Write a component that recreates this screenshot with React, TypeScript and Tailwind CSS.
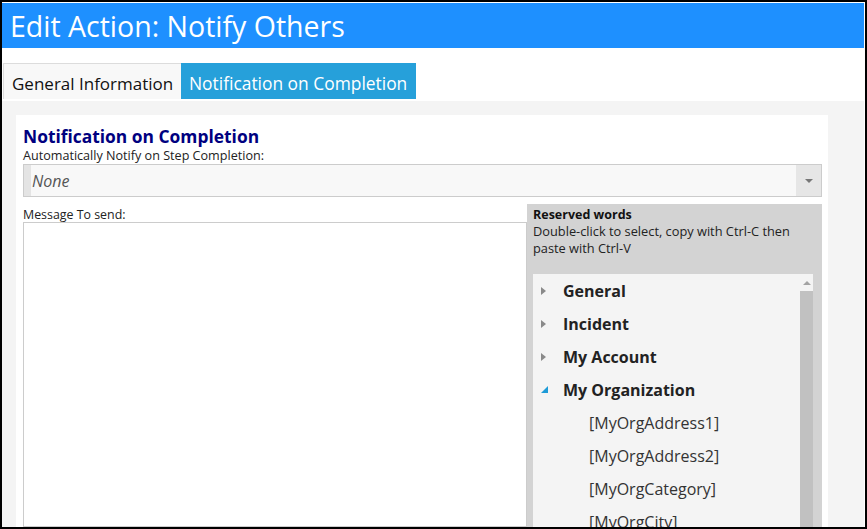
import React from "react";

const font = { fontFamily: '"Open Sans", "Noto Sans", sans-serif' };

function Collapsed() {
  return (
    <svg width="5" height="8" viewBox="0 0 5 8" className="block">
      <polygon points="0,0 5,4 0,8" fill="#8a8a8a" />
    </svg>
  );
}

function Expanded() {
  return (
    <svg width="7" height="7" viewBox="0 0 7 7" className="block">
      <polygon points="7,0 7,7 0,7" fill="#1e9bd7" />
    </svg>
  );
}

function GroupRow({ label, open }: { label: string; open?: boolean }) {
  return (
    <div className="flex h-[33px] items-center">
      <div className="flex w-[30px] justify-start pl-[8px]">
        {open ? <Expanded /> : <Collapsed />}
      </div>
      <span className="text-[16px] font-bold text-[#222]">{label}</span>
    </div>
  );
}

function ItemRow({ label }: { label: string }) {
  return (
    <div className="flex h-[33px] items-center pl-[56px] text-[16px] text-[#333]">{label}</div>
  );
}

export default function App() {
  return (
    <div
      className="flex h-[529px] w-[867px] flex-col overflow-hidden border-2 border-black bg-white"
      style={font}
    >
      <div className="h-px shrink-0" />
      <div className="mr-px flex h-[45px] shrink-0 items-center bg-[#1e90ff] pl-[8px] pt-[1px] text-[28.5px] text-white">
        Edit Action: Notify Others
      </div>
      <div className="h-[15px] shrink-0" />
      <div className="flex h-[36px] shrink-0 pl-px">
        <div className="flex w-[178px] items-center border-l border-t border-[#dcdcdc] bg-[#f8f8f8] pl-[8px] pt-[5px] text-[17px] text-[#111]">
          General Information
        </div>
        <div className="flex w-[235px] items-center bg-[#26a0da] pl-[8px] pt-[5px] text-[17.4px] text-white">
          Notification on Completion
        </div>
      </div>
      <div className="h-[2px] shrink-0" />
      <div className="mr-px flex min-h-0 flex-1 bg-[#f4f4f4] pl-[14px] pr-[36px] pt-[14px]">
        <div className="flex min-h-0 flex-1 flex-col bg-white pl-[7px] pr-[6px] pt-[9px]">
          <div className="text-[17.4px] font-bold leading-[24px] text-[#000080]">
            Notification on Completion
          </div>
          <div className="text-[12.6px] leading-[16px] text-[#222]">
            Automatically Notify on Step Completion:
          </div>
          <div className="flex h-[33px] shrink-0 border border-[#cccccc] bg-[#f8f8f8]">
            <div className="w-[7px] bg-[#e4e4e4]" />
            <div className="flex flex-1 items-center pl-[1px] text-[16px] italic text-[#555]">None</div>
            <div className="flex w-[25px] items-center justify-center bg-[#e6e6e6]">
              <svg width="8" height="4" viewBox="0 0 8 4" className="block">
                <polygon points="0,0 8,0 4,4" fill="#777" />
              </svg>
            </div>
          </div>
          <div className="flex min-h-0 flex-1 pt-[7px]">
            <div className="flex w-[504px] flex-col">
              <div className="pt-[3px] text-[12.4px] leading-[15px] text-[#222]">Message To send:</div>
              <div className="flex-1 border border-[#cccccc] bg-white" />
            </div>
            <div className="flex flex-1 flex-col bg-[#d3d3d3] pl-[6px] pr-[9px] pt-[3px]">
              <div className="text-[12.5px] font-bold leading-[16px] text-[#111]">Reserved words</div>
              <div className="whitespace-nowrap text-[12.8px] leading-[17px] text-[#222]">
                Double-click to select, copy with Ctrl-C then
                <br />
                paste with Ctrl-V
              </div>
              <div className="mt-[17px] flex min-h-0 flex-1 bg-[#f4f4f4]">
                <div className="flex-1 overflow-hidden">
                  <GroupRow label="General" />
                  <GroupRow label="Incident" />
                  <GroupRow label="My Account" />
                  <GroupRow label="My Organization" open />
                  <ItemRow label="[MyOrgAddress1]" />
                  <ItemRow label="[MyOrgAddress2]" />
                  <ItemRow label="[MyOrgCategory]" />
                  <ItemRow label="[MyOrgCity]" />
                </div>
                <div className="flex w-[13px] flex-col">
                  <div className="flex h-[17px] items-center justify-center">
                    <svg width="8" height="4" viewBox="0 0 8 4" className="block">
                      <polygon points="0,4 4,0 8,4" fill="#a3a3a3" />
                    </svg>
                  </div>
                  <div className="flex-1 bg-[#c1c1c1]" />
                </div>
              </div>
            </div>
          </div>
        </div>
      </div>
    </div>
  );
}
